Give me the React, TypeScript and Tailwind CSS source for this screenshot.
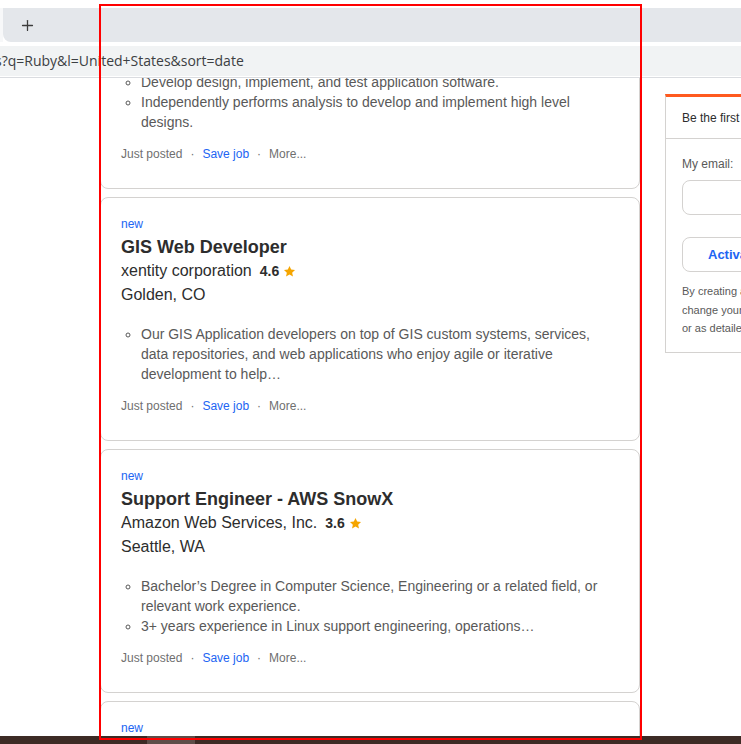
import { Plus } from "lucide-react"

type Job = {
  title: string
  company: string
  rating: string
  location: string
  bullets: string[]
}

const jobs: Job[] = [
  {
    title: "Software Engineer",
    company: "Northrop Grumman",
    rating: "4.0",
    location: "Aurora, CO",
    bullets: [
      "Develop design, implement, and test application software.",
      "Independently performs analysis to develop and implement high level designs.",
    ],
  },
  {
    title: "GIS Web Developer",
    company: "xentity corporation",
    rating: "4.6",
    location: "Golden, CO",
    bullets: [
      "Our GIS Application developers on top of GIS custom systems, services, data repositories, and web applications who enjoy agile or iterative development to help…",
    ],
  },
  {
    title: "Support Engineer - AWS SnowX",
    company: "Amazon Web Services, Inc.",
    rating: "3.6",
    location: "Seattle, WA",
    bullets: [
      "Bachelor’s Degree in Computer Science, Engineering or a related field, or relevant work experience.",
      "3+ years experience in Linux support engineering, operations…",
    ],
  },
  {
    title: "Ruby on Rails Developer",
    company: "Remote Labs",
    rating: "4.2",
    location: "Remote",
    bullets: ["Build and maintain Ruby on Rails applications."],
  },
]

function Star() {
  return (
    <svg width="13" height="13" viewBox="0 0 24 24" className="ml-[4px]">
      <path
        fill="#f5a500"
        d="M12 1.8l3.1 6.6 7.1.8-5.3 4.9 1.5 7.1L12 17.6l-6.4 3.6 1.5-7.1L1.8 9.2l7.1-.8z"
      />
    </svg>
  )
}

function JobCard({ job }: { job: Job }) {
  return (
    <div className="h-[244px] shrink-0 rounded-[8px] border border-[#d4d2d0] bg-white pl-[20px] pr-[20px] pt-[18px]">
      <div className="text-[12px] leading-[16px] text-[#2164f3]">new</div>
      <div className="mt-[3px] text-[18px] font-bold leading-[24px] text-[#2d2d2d]">{job.title}</div>
      <div className="flex items-center text-[16px] leading-[24px] text-[#2d2d2d]">
        <span>{job.company}</span>
        <span className="ml-[8px] text-[14px] font-bold">{job.rating}</span>
        <Star />
      </div>
      <div className="text-[16px] leading-[24px] text-[#2d2d2d]">{job.location}</div>
      <ul className="mt-[17px] list-[circle] pl-[20px] text-[14px] leading-[20px] text-[#595959]">
        {job.bullets.map((b) => (
          <li key={b}>{b}</li>
        ))}
      </ul>
      <div className="mt-[12px] flex items-center text-[12px] leading-[20px] text-[#6f6f6f]">
        <span>Just posted</span>
        <span className="mx-[8px]">·</span>
        <span className="text-[#2164f3]">Save job</span>
        <span className="mx-[8px]">·</span>
        <span>More...</span>
      </div>
    </div>
  )
}

export default function App() {
  return (
    <div className="relative flex h-[744px] w-[741px] flex-col overflow-hidden bg-white font-['Liberation_Sans',Arial,sans-serif]">
      {/* browser chrome */}
      <div className="h-[78px] shrink-0 border-b border-[#dadce0] bg-white">
        <div className="mt-[8px] flex h-[34px]">
          <div className="w-[3px] bg-[#f7f8f9]" />
          <div className="flex flex-1 items-center rounded-bl-[8px] bg-[#e4e7eb] pl-[16px]">
            <Plus size={17} strokeWidth={1.8} className="text-[#3c3c3c]" />
          </div>
        </div>
        <div className="mt-[4px] flex h-[30px] items-center overflow-hidden bg-[#f1f3f4] pb-[2px] font-['Open_Sans',sans-serif] text-[14px] text-[#3c4043]">
          <span className="-ml-[5px] whitespace-nowrap">s?q=Ruby&amp;l=United+States&amp;sort=date</span>
        </div>
      </div>

      {/* page */}
      <div className="flex min-h-0 flex-1 items-start gap-[25px] overflow-hidden pl-[100px]">
        <div className="-mt-[133px] flex w-[540px] shrink-0 flex-col gap-[8px]">
          {jobs.map((j) => (
            <JobCard key={j.title} job={j} />
          ))}
        </div>

        <div className="mt-[16px] w-[300px] shrink-0 border-x border-b border-[#d4d2d0] border-t-[3px] border-t-[#ff5a1f] bg-white">
          <div className="whitespace-nowrap border-b border-[#d4d2d0] px-[16px] pb-[11px] pt-[13px] text-[12px] leading-[17px] text-[#2d2d2d]">
            Be the first to see new Ruby jobs in United States
          </div>
          <div className="px-[16px] pb-[14px] pt-[17px]">
            <div className="text-[12px] leading-[16px] text-[#595959]">My email:</div>
            <div className="mt-[8px] h-[35px] rounded-[8px] border border-[#d4d2d0]" />
            <button className="mt-[22px] h-[35px] rounded-[8px] border border-[#d4d2d0] px-[25px] text-[13px] font-bold text-[#2164f3]">
              Activate
            </button>
            <div className="mt-[10px] text-[11px] leading-[18.5px] text-[#595959]">
              <div className="whitespace-nowrap">By creating a job alert, you agree to our Terms. You can</div>
              <div className="whitespace-nowrap">change your consent settings at any time by unsubscribing</div>
              <div className="whitespace-nowrap">or as detailed in our terms.</div>
            </div>
          </div>
        </div>
      </div>

      {/* taskbar */}
      <div className="flex h-[8px] shrink-0 bg-[#3d2b25]">
        <div className="ml-[147px] w-[48px] bg-[#5e4e49]" />
      </div>

      {/* annotation rectangle */}
      <div className="pointer-events-none absolute left-[99px] top-[4px] h-[736px] w-[543px] border-2 border-[#ff0000]" />
    </div>
  )
}
